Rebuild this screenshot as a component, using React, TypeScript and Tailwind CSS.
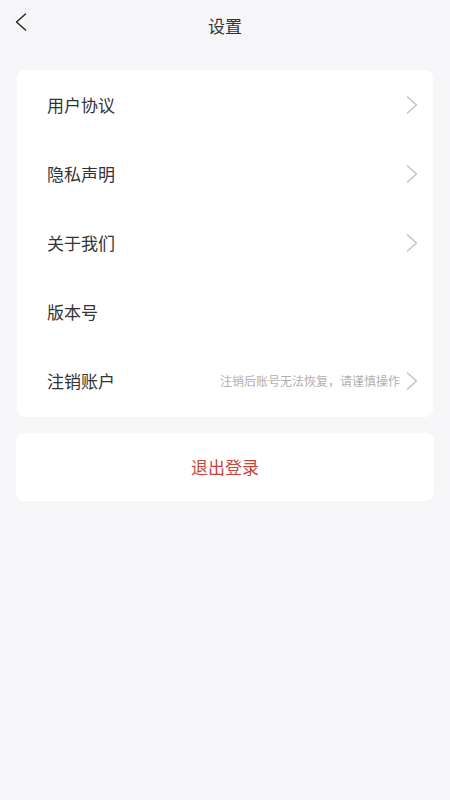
const rows = [
  { label: "用户协议", arrow: true },
  { label: "隐私声明", arrow: true },
  { label: "关于我们", arrow: true },
  { label: "版本号", arrow: false },
  { label: "注销账户", arrow: true, hint: "注销后账号无法恢复，请谨慎操作" },
];

const Arrow = ({ color, dir }: { color: string; dir: "left" | "right" }) => (
  <svg width="12" height="18" viewBox="0 0 12 18" fill="none">
    <polyline
      points={dir === "right" ? "1.5,1 10.5,9 1.5,17" : "10.5,1 1.5,9 10.5,17"}
      stroke={color}
      strokeWidth="1.4"
      strokeLinecap="round"
      strokeLinejoin="round"
    />
  </svg>
);

const App = () => {
  return (
    <div
      className="min-h-[800px] w-[450px] bg-[#f6f6f8] flex flex-col"
      style={{ fontFamily: '"Noto Sans CJK SC", "Noto Sans", sans-serif' }}
    >
      {/* Header */}
      <div className="relative h-[52px] flex items-center justify-center">
        <button className="absolute left-[15px] top-[13px]">
          <Arrow color="#222" dir="left" />
        </button>
        <h1 className="text-[17px] text-[#333] pb-[1px]">设置</h1>
      </div>

      {/* Settings list */}
      <div className="mx-[17px] mt-[18px] pb-[2px] bg-white rounded-[8px]">
        {rows.map(row => (
          <div key={row.label} className="h-[69px] flex items-center justify-between pl-[30px] pr-[15px]">
            <span className="text-[17px] text-[#333]">{row.label}</span>
            <div className="flex items-center gap-[6px]">
              {row.hint && (
                <span className="text-[12px] text-[#b0b0b0]">{row.hint}</span>
              )}
              {row.arrow && <Arrow color="#c0c0c0" dir="right" />}
            </div>
          </div>
        ))}
      </div>

      {/* Logout */}
      <div className="mx-[16px] mt-[16px] h-[68px] bg-white rounded-[8px] flex items-center justify-center">
        <span className="text-[17px] text-[#c8453c]">退出登录</span>
      </div>
    </div>
  );
};

export default App;
